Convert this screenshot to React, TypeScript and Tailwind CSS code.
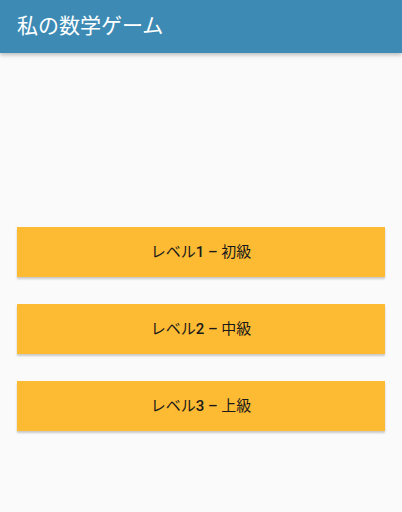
export default function App() {
  const levels = [
    { num: "1", name: "初級" },
    { num: "2", name: "中級" },
    { num: "3", name: "上級" },
  ];

  return (
    <div
      className="w-[402px] h-[512px] bg-[#fafafa] flex flex-col"
      style={{ fontFamily: 'Roboto, "Noto Sans CJK JP", sans-serif' }}
    >
      <header className="h-[53px] bg-[#3d8bb5] flex items-center px-[17px] shadow-[0_2px_4px_rgba(0,0,0,0.25)]">
        <span className="text-white text-[21px]">私の数学ゲーム</span>
      </header>

      <div className="flex flex-col gap-[27px] px-[17px] pt-[174px]">
        {levels.map((l) => (
          <button
            key={l.num}
            className="h-[50px] w-full bg-[#fdbb34] text-[#1a1a1a] text-[15px] shadow-[0_2px_2px_rgba(0,0,0,0.2)]"
          >
            レベル<span className="font-medium">{l.num} – </span>
            {l.name}
          </button>
        ))}
      </div>
    </div>
  );
}
